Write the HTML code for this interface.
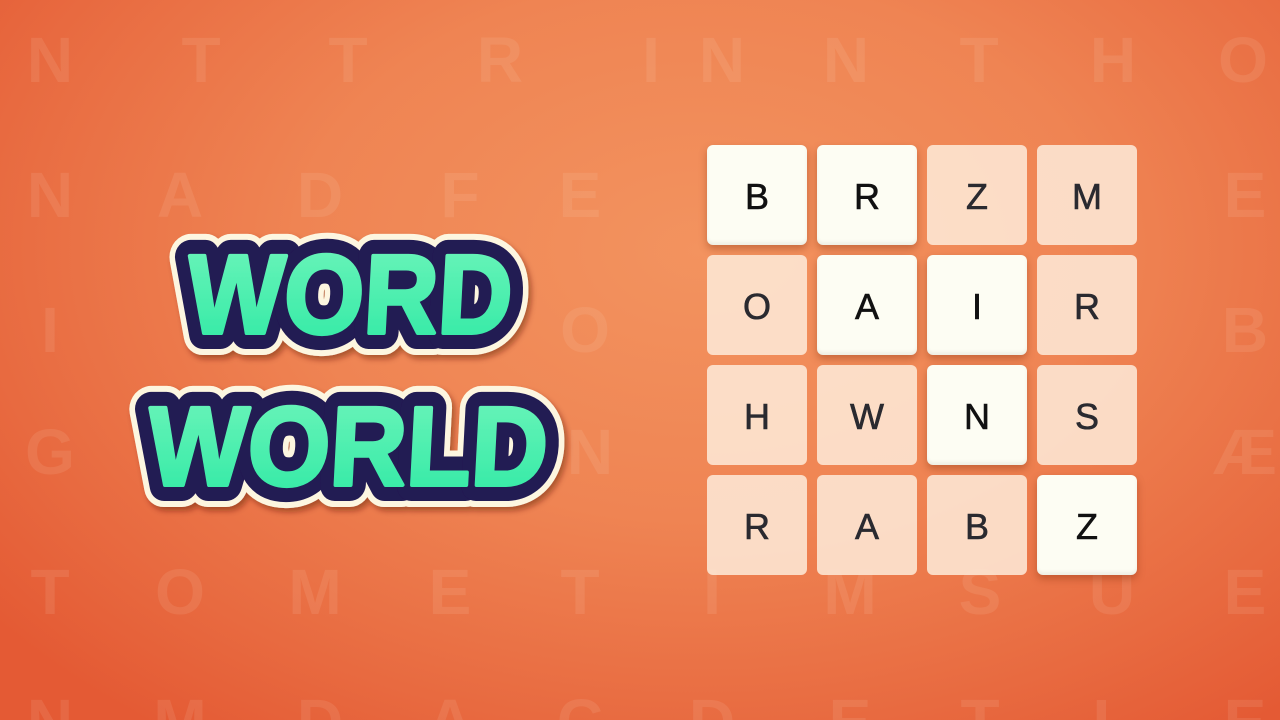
<!DOCTYPE html>
<html><head><meta charset="utf-8"><style>
html,body{margin:0;padding:0;width:1280px;height:720px;overflow:hidden}
body{position:relative;font-family:"Liberation Sans",sans-serif;
background:radial-gradient(ellipse 900px 600px at 700px 250px,#f3935f 0%,#ef8453 45%,#e86a40 80%,#e45a34 100%);}
.bg{position:absolute;left:0;top:0;width:1280px;height:720px;overflow:hidden}
.bg span{position:absolute;font-weight:bold;font-size:64px;color:rgba(255,235,215,0.1);transform:translateX(-50%);line-height:1}
.tile{position:absolute;width:100px;height:100px;border-radius:6px;display:flex;align-items:center;justify-content:center;font-size:36px;color:#2a2a30;-webkit-text-stroke:0.6px currentColor;padding-top:4px;box-sizing:border-box}
.w{background:#fdfdf3;color:#111;box-shadow:0 4px 8px rgba(120,40,10,0.35),inset 0 -3px 3px rgba(0,0,0,0.06)}
.p{background:rgba(253,232,214,0.88)}
</style></head><body>
<div class="bg">
<span style="left:50px;top:28px">N</span><span style="left:201px;top:28px">T</span><span style="left:348px;top:28px">T</span><span style="left:500px;top:28px">R</span><span style="left:651px;top:28px">I</span><span style="left:722px;top:28px">N</span><span style="left:846px;top:28px">N</span><span style="left:979px;top:28px">T</span><span style="left:1113px;top:28px">H</span><span style="left:1243px;top:28px">O</span>
<span style="left:50px;top:163px">N</span><span style="left:180px;top:163px">A</span><span style="left:320px;top:163px">D</span><span style="left:460px;top:163px">F</span><span style="left:580px;top:163px">E</span><span style="left:1245px;top:163px">E</span>
<span style="left:50px;top:298px">I</span><span style="left:585px;top:298px">O</span><span style="left:1245px;top:298px">B</span>
<span style="left:50px;top:420px">G</span><span style="left:590px;top:420px">N</span><span style="left:1245px;top:420px">Æ</span>
<span style="left:50px;top:560px">T</span><span style="left:180px;top:560px">O</span><span style="left:315px;top:560px">M</span><span style="left:450px;top:560px">E</span><span style="left:580px;top:560px">T</span><span style="left:712px;top:560px">I</span><span style="left:850px;top:560px">M</span><span style="left:980px;top:560px">S</span><span style="left:1112px;top:560px">U</span><span style="left:1245px;top:560px">E</span>
<span style="left:50px;top:690px">N</span><span style="left:180px;top:690px">M</span><span style="left:320px;top:690px">D</span><span style="left:450px;top:690px">A</span><span style="left:580px;top:690px">C</span><span style="left:712px;top:690px">D</span><span style="left:850px;top:690px">E</span><span style="left:980px;top:690px">T</span><span style="left:1112px;top:690px">L</span><span style="left:1245px;top:690px">E</span>
</div>
<svg width="1280" height="720" style="position:absolute;left:0;top:0">
<defs><filter id="sh"><feDropShadow dx="3" dy="4" stdDeviation="3" flood-color="#5a1a00" flood-opacity="0.45"/></filter>
<linearGradient id="g" x1="0" y1="0" x2="0" y2="1"><stop offset="0" stop-color="#6ff5bb"/><stop offset="1" stop-color="#2ee9a4"/></linearGradient></defs>
<g font-family="Liberation Sans" font-weight="900" font-size="112" text-anchor="middle" stroke-linejoin="round" filter="url(#sh)">
<g transform="translate(348,333) skewX(-3)">
<text x="0" y="0" textLength="325" lengthAdjust="spacingAndGlyphs" fill="#fdf6e0" stroke="#fdf6e0" stroke-width="44">WORD</text>
<text x="0" y="0" textLength="325" lengthAdjust="spacingAndGlyphs" fill="#231a52" stroke="#231a52" stroke-width="32">WORD</text>
<text x="0" y="0" textLength="325" lengthAdjust="spacingAndGlyphs" fill="url(#g)" stroke="url(#g)" stroke-width="4">WORD</text>
</g>
<g transform="translate(346,485) skewX(-3)">
<text x="0" y="0" textLength="400" lengthAdjust="spacingAndGlyphs" fill="#fdf6e0" stroke="#fdf6e0" stroke-width="44">WORLD</text>
<text x="0" y="0" textLength="400" lengthAdjust="spacingAndGlyphs" fill="#231a52" stroke="#231a52" stroke-width="32">WORLD</text>
<text x="0" y="0" textLength="400" lengthAdjust="spacingAndGlyphs" fill="url(#g)" stroke="url(#g)" stroke-width="4">WORLD</text>
</g>
</g>
</svg>
<div class="tile w" style="left:707px;top:145px">B</div>
<div class="tile w" style="left:817px;top:145px">R</div>
<div class="tile p" style="left:927px;top:145px">Z</div>
<div class="tile p" style="left:1037px;top:145px">M</div>
<div class="tile p" style="left:707px;top:255px">O</div>
<div class="tile w" style="left:817px;top:255px">A</div>
<div class="tile w" style="left:927px;top:255px">I</div>
<div class="tile p" style="left:1037px;top:255px">R</div>
<div class="tile p" style="left:707px;top:365px">H</div>
<div class="tile p" style="left:817px;top:365px">W</div>
<div class="tile w" style="left:927px;top:365px">N</div>
<div class="tile p" style="left:1037px;top:365px">S</div>
<div class="tile p" style="left:707px;top:475px">R</div>
<div class="tile p" style="left:817px;top:475px">A</div>
<div class="tile p" style="left:927px;top:475px">B</div>
<div class="tile w" style="left:1037px;top:475px">Z</div>
</body></html>
